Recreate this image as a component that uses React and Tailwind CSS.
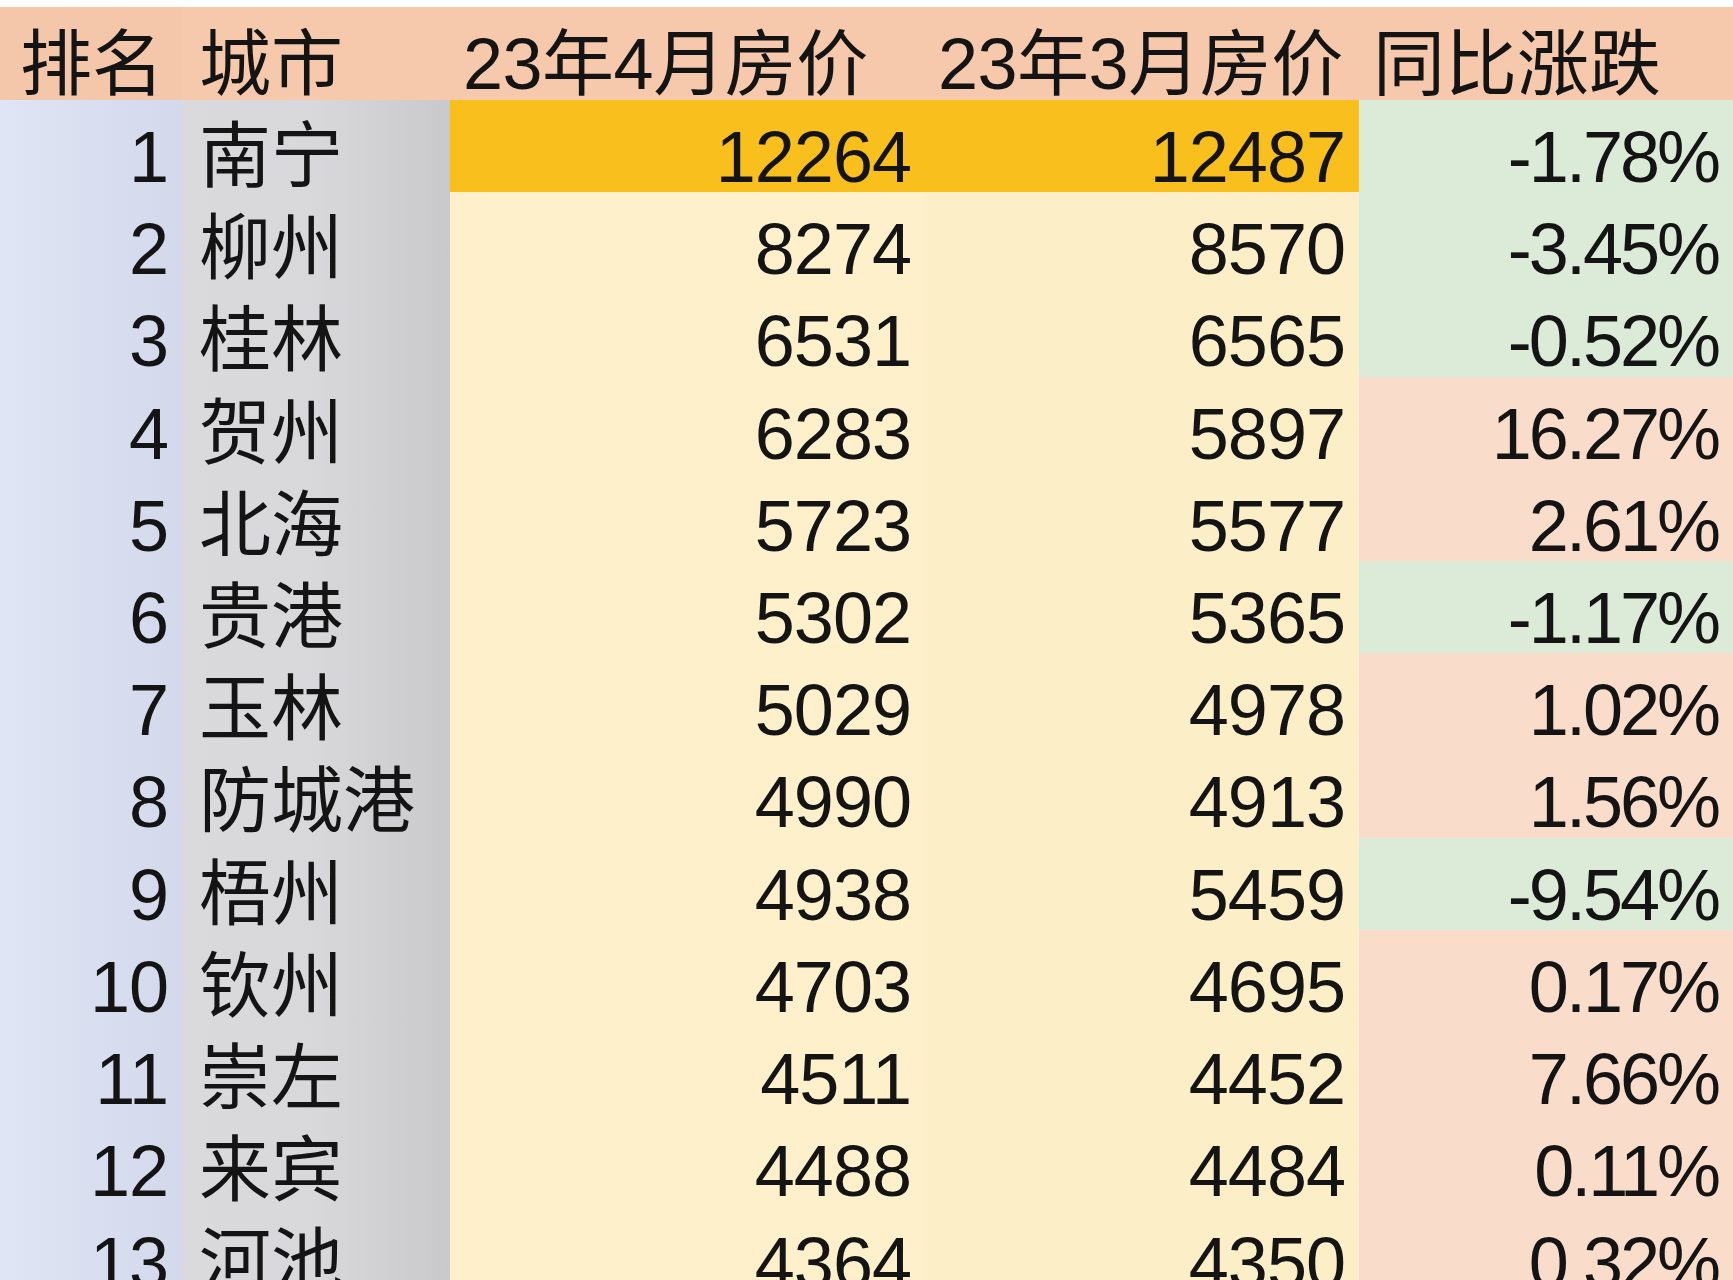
import React from "react";

const rows = [
    { rank: 1, city: "南宁", apr: "12264", mar: "12487", pct: "-1.78%", up: false },
    { rank: 2, city: "柳州", apr: "8274", mar: "8570", pct: "-3.45%", up: false },
    { rank: 3, city: "桂林", apr: "6531", mar: "6565", pct: "-0.52%", up: false },
    { rank: 4, city: "贺州", apr: "6283", mar: "5897", pct: "16.27%", up: true },
    { rank: 5, city: "北海", apr: "5723", mar: "5577", pct: "2.61%", up: true },
    { rank: 6, city: "贵港", apr: "5302", mar: "5365", pct: "-1.17%", up: false },
    { rank: 7, city: "玉林", apr: "5029", mar: "4978", pct: "1.02%", up: true },
    { rank: 8, city: "防城港", apr: "4990", mar: "4913", pct: "1.56%", up: true },
    { rank: 9, city: "梧州", apr: "4938", mar: "5459", pct: "-9.54%", up: false },
    { rank: 10, city: "钦州", apr: "4703", mar: "4695", pct: "0.17%", up: true },
    { rank: 11, city: "崇左", apr: "4511", mar: "4452", pct: "7.66%", up: true },
    { rank: 12, city: "来宾", apr: "4488", mar: "4484", pct: "0.11%", up: true },
    { rank: 13, city: "河池", apr: "4364", mar: "4350", pct: "0.32%", up: true },
];

const cols = "grid grid-cols-[182px_268px_474px_435px_1fr]";

const App = () => {
    return (
        <div
            className="w-[1733px] h-[1280px] overflow-hidden bg-white text-[#141414] text-[72px] leading-none"
            style={{ fontFamily: '"Liberation Sans", "Noto Sans CJK SC", sans-serif' }}
        >
            <div className="h-[7px] bg-white" />
            {/* header */}
            <div className={`${cols} h-[93px] bg-[#f6c9ac]`}>
                <div className="pl-[20px] pt-[21px] bg-[#f4c6aa]">排名</div>
                <div className="pl-[17px] pt-[21px]">城市</div>
                <div className="pl-[13px] pt-[21px] whitespace-nowrap tracking-[-0.5px]">23年4月房价</div>
                <div className="pl-[14px] pt-[21px] whitespace-nowrap tracking-[-0.5px]">23年3月房价</div>
                <div className="pl-[14px] pt-[21px] whitespace-nowrap mr-[21px]">同比涨跌</div>
            </div>
            {/* body */}
            <div className={cols}>
                {rows.map((row) => (
                    <React.Fragment key={row.rank}>
                        <div className="h-[92.2px] pr-[14px] pt-[21px] text-right tracking-[-1px] bg-gradient-to-r from-[#dfe5f4] to-[#d3d9eb]">
                            {row.rank}
                        </div>
                        <div className="h-[92.2px] pl-[17px] pt-[20px] whitespace-nowrap bg-gradient-to-r from-[#dadadc] via-[#d8d8da] to-[#c9c9cc]">
                            {row.city}
                        </div>
                        <div
                            className={`h-[92.2px] pr-[13px] pt-[21px] text-right tracking-[-1px] ${
                                row.rank === 1 ? "bg-[#f9bf1c]" : "bg-[#fdf0ca]"
                            }`}
                        >
                            {row.apr}
                        </div>
                        <div
                            className={`h-[92.2px] pr-[14px] pt-[21px] text-right tracking-[-1px] ${
                                row.rank === 1 ? "bg-[#f9bf1c]" : "bg-[#fceec7]"
                            }`}
                        >
                            {row.mar}
                        </div>
                        <div
                            className={`h-[92.2px] pr-[15px] pt-[21px] text-right tracking-[-3px] ${
                                row.up ? "bg-[#f9dcca]" : "bg-[#dcebd8]"
                            }`}
                        >
                            {row.pct}
                        </div>
                    </React.Fragment>
                ))}
            </div>
        </div>
    );
};

export default App;
